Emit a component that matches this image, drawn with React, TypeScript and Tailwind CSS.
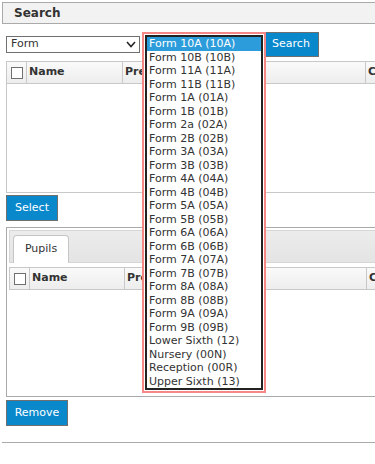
import React from "react";

const items = [
  "Form 10A (10A)",
  "Form 10B (10B)",
  "Form 11A (11A)",
  "Form 11B (11B)",
  "Form 1A (01A)",
  "Form 1B (01B)",
  "Form 2a (02A)",
  "Form 2B (02B)",
  "Form 3A (03A)",
  "Form 3B (03B)",
  "Form 4A (04A)",
  "Form 4B (04B)",
  "Form 5A (05A)",
  "Form 5B (05B)",
  "Form 6A (06A)",
  "Form 6B (06B)",
  "Form 7A (07A)",
  "Form 7B (07B)",
  "Form 8A (08A)",
  "Form 8B (08B)",
  "Form 9A (09A)",
  "Form 9B (09B)",
  "Lower Sixth (12)",
  "Nursery (00N)",
  "Reception (00R)",
  "Upper Sixth (13)",
];

function Check() {
  return <div className="w-[12px] h-[12px] border border-[#6f6f6f] bg-white" />;
}

function HeaderRow({ first }: { first: boolean }) {
  return (
    <div className="flex h-[23px] border border-[#c8c8c8] bg-gradient-to-b from-[#fafafa] to-[#ededed] font-bold text-[11px] text-[#333]">
      <div className={`${first ? "w-[20px]" : "w-[20px]"} border-r border-[#c8c8c8] flex items-center justify-center`}>
        <Check />
      </div>
      <div className={`${first ? "w-[96px]" : "w-[95px]"} border-r border-[#c8c8c8] flex items-center pl-[2px]`}>
        Name
      </div>
      <div className={`${first ? "w-[243px]" : "w-[242px]"} border-r border-[#c8c8c8] flex items-center pl-[2px]`}>
        Preferred Name
      </div>
      <div className="flex-1 flex items-center pl-[2px]">Class</div>
    </div>
  );
}

export default function App() {
  return (
    <div className="relative w-[375px] h-[464px] overflow-hidden bg-white text-[#333] text-[11px] font-['DejaVu_Sans',Verdana,sans-serif]">
      <div className="w-[420px] pl-[2px] pt-[2px]">
        <div className="h-[22px] border border-[#aaa] bg-[#f2f2f2] flex items-center pl-[11px] font-bold text-[12px] text-[#333]">
          Search
        </div>
        <div className="pl-[4px]">
          <div className="mt-[8px] flex items-center h-[25px]">
            <div className="w-[134px] h-[17px] border border-[#707070] flex items-center justify-between pl-[4px] pr-[3px] bg-white">
              <span>Form</span>
              <svg width="10" height="7" viewBox="0 0 10 7">
                <polyline points="1,1 5,5.5 9,1" fill="none" stroke="#222" strokeWidth="1.5" />
              </svg>
            </div>
            <button className="ml-[123px] w-[56px] h-[25px] bg-[#0a88cc] border border-[#6f6f6f] text-white text-[11px] font-['DejaVu_Sans',Verdana,sans-serif]">
              Search
            </button>
          </div>

          <div className="mt-[4px]">
            <HeaderRow first={true} />
            <div className="h-[109px] border-l border-b border-[#c8c8c8]" />
          </div>

          <button className="mt-[2px] w-[52px] h-[26px] bg-[#0a88cc] border border-[#6f6f6f] text-white text-[11px] block font-['DejaVu_Sans',Verdana,sans-serif]">
            Select
          </button>

          <div className="mt-[6px] h-[170px] border border-[#aaa] p-[2px]">
            <div className="h-[33px] border border-[#d6d6d6] bg-gradient-to-b from-[#ececec] to-[#e4e4e4] flex items-end pl-[3px]">
              <div className="w-[56px] h-[28px] -mb-px bg-white border border-b-0 border-[#c5c5c5] rounded-t-[4px] flex items-center justify-center text-[11px] text-[#333]">
                Pupils
              </div>
            </div>
            <div className="mt-[4px]">
              <HeaderRow first={false} />
            </div>
          </div>

          <button className="mt-[3px] w-[62px] h-[26px] bg-[#0a88cc] border border-[#6f6f6f] text-white text-[11px] block font-['DejaVu_Sans',Verdana,sans-serif]">
            Remove
          </button>
        </div>
        <div className="mt-[16px] border-t border-[#aaa]" />
      </div>

      <div className="absolute left-[142px] top-[32px] w-[124px] h-[361px] border-2 border-[#f58787] bg-white p-px">
        <div className="h-full border-2 border-[#222] bg-white">
          {items.map((it, i) => (
            <div
              key={it}
              className={`h-[13.5px] leading-[13.5px] pl-[2px] whitespace-nowrap text-[11px] ${
                i === 0 ? "bg-[#2d9cdb] text-white" : "text-[#333]"
              }`}
            >
              {it}
            </div>
          ))}
        </div>
      </div>
    </div>
  );
}
